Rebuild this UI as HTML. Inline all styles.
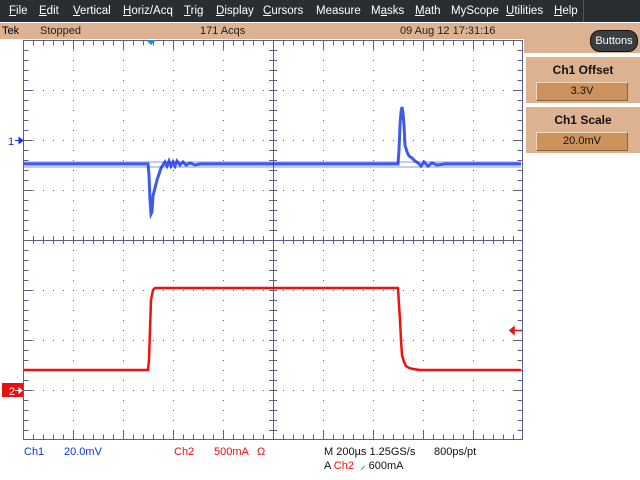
<!DOCTYPE html>
<html><head><style>
body{margin:0;width:640px;height:480px;overflow:hidden;background:#fff;font-family:"Liberation Sans",sans-serif;position:relative}
.menu{position:absolute;left:0;top:0;width:640px;height:22px;background:#2a2e33;color:#fff;font-size:11.5px}
.menu span{position:absolute;top:5px}
.menu u{text-decoration:underline}
.stat{position:absolute;left:0;top:23px;width:640px;height:16px;background:#dcb290;font-size:11px;color:#222}
.stat span{position:absolute;top:2px}
.rp{position:absolute;left:524px;top:39px;width:116px;height:14px;background:#dcb290}
.box{position:absolute;left:526px;width:114px;height:46px;background:#dcb290}
.box b{position:absolute;left:0;width:100%;text-align:center;top:6px;font-size:12px;color:#111}
.box i{position:absolute;left:10px;top:25px;width:90px;height:17px;background:#cc925c;border:1px solid #f0d8c0;border-right-color:#8a6040;border-bottom-color:#8a6040;font-style:normal;text-align:center;font-size:11px;line-height:17px;color:#111}
.btn{position:absolute;left:590px;top:30px;width:46px;height:20px;border-radius:10px;background:#3a3e42;border:1px solid #111;color:#fff;font-size:11px;text-align:center;line-height:20px}
.bot{position:absolute;font-size:11px}
</style></head><body>
<div class="menu">
<span style="left:9px"><u>F</u>ile</span><span style="left:39px"><u>E</u>dit</span><span style="left:73px"><u>V</u>ertical</span><span style="left:123px"><u>H</u>oriz/Acq</span><span style="left:184px"><u>T</u>rig</span><span style="left:216px"><u>D</u>isplay</span><span style="left:263px"><u>C</u>ursors</span><span style="left:316px">Measure</span><span style="left:371px">M<u>a</u>sks</span><span style="left:415px"><u>M</u>ath</span><span style="left:451px">MyScope</span><span style="left:506px"><u>U</u>tilities</span><span style="left:554px"><u>H</u>elp</span>
<div style="position:absolute;left:583px;top:0;width:1px;height:22px;background:#555"></div>
</div>
<div class="stat"><span style="left:2px;color:#000">Tek</span><span style="left:40px">Stopped</span><span style="left:200px">171 Acqs</span><span style="left:400px">09 Aug 12 17:31:16</span></div>
<div class="rp"></div>
<div class="btn">Buttons</div>
<div class="box" style="top:57px"><b>Ch1 Offset</b><i>3.3V</i></div>
<div class="box" style="top:107px"><b>Ch1 Scale</b><i>20.0mV</i></div>
<svg style="position:absolute;left:0;top:0" width="640" height="480" shape-rendering="crispEdges">
<g stroke="#5c6088" fill="none">
<g stroke-width="1" stroke-dasharray="1 9">
<line x1="73.5" y1="50" x2="73.5" y2="440"/><line x1="123.5" y1="50" x2="123.5" y2="440"/><line x1="173.5" y1="50" x2="173.5" y2="440"/><line x1="223.5" y1="50" x2="223.5" y2="440"/><line x1="323.5" y1="50" x2="323.5" y2="440"/><line x1="373.5" y1="50" x2="373.5" y2="440"/><line x1="423.5" y1="50" x2="423.5" y2="440"/><line x1="473.5" y1="50" x2="473.5" y2="440"/>
<line x1="33" y1="90.5" x2="523" y2="90.5"/><line x1="33" y1="140.5" x2="523" y2="140.5"/><line x1="33" y1="190.5" x2="523" y2="190.5"/><line x1="33" y1="290.5" x2="523" y2="290.5"/><line x1="33" y1="340.5" x2="523" y2="340.5"/><line x1="33" y1="390.5" x2="523" y2="390.5"/>
</g>
<line x1="273.5" y1="40" x2="273.5" y2="440"/><line x1="23" y1="240.5" x2="523" y2="240.5"/>
<rect x="23.5" y="40.5" width="499" height="399"/>
<line x1="23" y1="240" x2="523" y2="240" stroke-width="8" stroke-dasharray="1 9"/>
<line x1="273" y1="40" x2="273" y2="440" stroke-width="8" stroke-dasharray="1 9"/>
<line x1="23" y1="43" x2="523" y2="43" stroke-width="5" stroke-dasharray="1 9"/>
<line x1="23" y1="45" x2="523" y2="45" stroke-width="9" stroke-dasharray="1 49"/>
<line x1="23" y1="437" x2="523" y2="437" stroke-width="5" stroke-dasharray="1 9"/>
<line x1="23" y1="435" x2="523" y2="435" stroke-width="9" stroke-dasharray="1 49"/>
<line x1="26" y1="40" x2="26" y2="440" stroke-width="5" stroke-dasharray="1 9"/>
<line x1="28" y1="40" x2="28" y2="440" stroke-width="9" stroke-dasharray="1 49"/>
<line x1="520" y1="40" x2="520" y2="440" stroke-width="5" stroke-dasharray="1 9"/>
<line x1="518" y1="40" x2="518" y2="440" stroke-width="9" stroke-dasharray="1 49"/>
</g>
</svg>
<svg style="position:absolute;left:0;top:0" width="640" height="480">
<polygon points="146,40 156,40 151,45" fill="#1a8fe0"/>
<polyline fill="none" stroke="#1030e8" stroke-width="3" opacity="0.8" points="24,164 148,164 149,175 150,200 151,214 152,212 153,196 155,188 157,180 159,174 161,168 163,165 165,162 167,166 169,161 171,166 173,162 175,166 177,161 180,165 183,162 186,165 190,163 195,165 200,164 398,164 399,150 400,125 401,112 402,107 403,113 404,125 405,145 407,152 409,156 412,158 415,161 418,163 421,166 424,162 428,166 432,163 437,165 445,164 521,164"/>
<polyline fill="none" stroke="#1030e8" stroke-width="1" opacity="0.5" points="24,162 521,162"/>
<polyline fill="none" stroke="#1030e8" stroke-width="1" opacity="0.5" points="24,167 521,167"/>
<polyline fill="none" stroke="#f01010" stroke-width="2.5" points="24,370 148,370 149,360 150,330 151,300 153,290 155,288 398,288 399,305 400,320 401,340 402,355 404,362 406,366 409,368 413,369 420,370 521,370"/>
<text x="8" y="145" fill="#1030e8" font-family="Liberation Sans" font-size="11">1</text>
<path d="M15 140.5 H23 M19 137.5 L23 140.5 L19 143.5Z" stroke="#1030e8" fill="#1030e8"/>
<rect x="2" y="383" width="21" height="14" fill="#e81010"/>
<text x="9" y="395" fill="#fff" font-family="Liberation Sans" font-size="11">2</text>
<path d="M15 390.5 H22 M19 388 L22 390.5 L19 393Z" stroke="#fff" fill="#fff"/>
<path d="M511 330.5 H522 M510 330.5 L514 327 L514 334Z" stroke="#e81010" fill="#e81010" stroke-width="1.5"/>
</svg>
<div class="bot" style="left:24px;top:446px;color:#1030e8">Ch1</div>
<div class="bot" style="left:64px;top:446px;color:#1030e8">20.0mV</div>
<div class="bot" style="left:174px;top:446px;color:#e81010">Ch2</div>
<div class="bot" style="left:214px;top:446px;color:#e81010">500mA</div>
<div class="bot" style="left:257px;top:446px;color:#e81010">Ω</div>
<div class="bot" style="left:324px;top:446px;color:#111">M 200µs 1.25GS/s</div>
<div class="bot" style="left:434px;top:446px;color:#111">800ps/pt</div>
<div class="bot" style="left:324px;top:458px;color:#111">A <span style="color:#e81010">Ch2</span> &nbsp;⸝ 600mA</div>
</body></html>
